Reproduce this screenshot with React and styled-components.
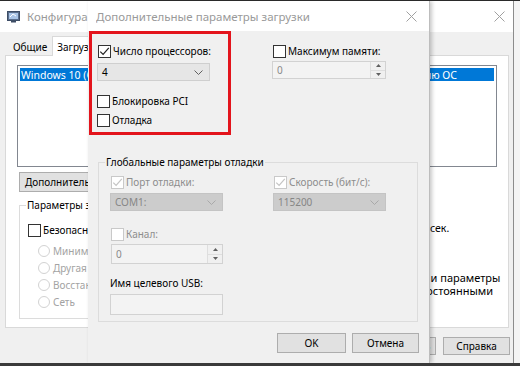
import React from "react";
import styled, { createGlobalStyle } from "styled-components";

const GlobalStyle = createGlobalStyle`
  html, body {
    margin: 0;
    padding: 0;
  }
  body {
    width: 520px;
    height: 366px;
    overflow: hidden;
    background: #f2f2f2;
    font-family: "Noto Sans", "Open Sans", sans-serif;
    font-size: 10px;
    color: #000;
  }
`;

const Desktop = styled.div`
  position: relative;
  width: 520px;
  height: 366px;
  box-sizing: border-box;
  border-top: 1px solid #2a2a2a;
  border-bottom: 3px solid #3a3a3a;
  background: #f4f4f4;
  overflow: hidden;
`;

const Window = styled.div`
  position: absolute;
  z-index: ${(p) => (p.$front ? 2 : 1)};
  left: ${(p) => p.$left}px;
  top: 0;
  width: ${(p) => p.$width}px;
  height: 362px;
  box-sizing: border-box;
  background: #f0f0f0;
  display: flex;
  flex-direction: column;
  overflow: hidden;
  border-right: 1px solid ${(p) => (p.$front ? "#bdbdbd" : "#8c8c8c")};
  box-shadow: ${(p) => (p.$front ? "2px 0 4px rgba(0, 0, 0, 0.22)" : "none")};
`;

const TitleBar = styled.div`
  height: ${(p) => p.$height}px;
  flex: none;
  background: #fff;
  display: flex;
  align-items: center;
  gap: 7px;
  padding-left: ${(p) => p.$pad}px;
  padding-right: ${(p) => p.$padRight}px;
`;

const TitleText = styled.div`
  flex: 1;
  font-size: 11.5px;
  color: #9a9a9a;
  white-space: nowrap;
  overflow: hidden;
`;

const CloseIcon = () => (
  <svg width="11" height="11" viewBox="0 0 11 11">
    <path d="M0.5 0.5 L10.5 10.5 M10.5 0.5 L0.5 10.5" stroke="#a0a0a0" strokeWidth="1" fill="none" />
  </svg>
);

const AppIcon = () => (
  <svg width="13" height="13" viewBox="0 0 13 13">
    <rect x="0.5" y="1.5" width="12" height="9" fill="#5a6e8c" stroke="#3d4d66" />
    <rect x="2" y="3" width="9" height="6" fill="#a9c4e6" />
    <path d="M3 7 L6 4 L9 6" stroke="#ffffff" strokeWidth="1" fill="none" />
    <rect x="4" y="11" width="5" height="1.5" fill="#3d4d66" />
  </svg>
);

/* ---------- checkboxes, radios, fields ---------- */

const Box = styled.span`
  width: 13px;
  height: 13px;
  flex: none;
  box-sizing: border-box;
  border: 1px solid ${(p) => (p.$disabled ? "#c9c9c9" : "#333")};
  background: #fff;
  display: inline-flex;
  align-items: center;
  justify-content: center;
`;

const Check = ({ checked, disabled }) => (
  <Box $disabled={disabled}>
    {checked && (
      <svg width="11" height="11" viewBox="0 0 11 11">
        <path
          d="M1.3 5.6 L4.1 8.4 L9.8 1.8"
          fill="none"
          stroke={disabled ? "#c4c4c4" : "#222"}
          strokeWidth="1.2"
        />
      </svg>
    )}
  </Box>
);

const CheckRow = styled.div`
  display: flex;
  align-items: center;
  gap: 2px;
  height: 14px;
  margin-top: ${(p) => p.$top || 0}px;
  margin-left: ${(p) => p.$left || 0}px;
  color: ${(p) => (p.$disabled ? "#8d8d8d" : "#000")};
  white-space: nowrap;
`;

const Radio = styled.span`
  width: 12px;
  height: 12px;
  flex: none;
  box-sizing: border-box;
  border: 1px solid #d2d2d2;
  border-radius: 50%;
  background: #fff;
`;

const RadioRow = styled.div`
  display: flex;
  align-items: center;
  gap: 3px;
  height: 17px;
  color: #a3a3a3;
  white-space: nowrap;
`;

const Chevron = ({ color }) => (
  <svg width="9" height="5" viewBox="0 0 9 5">
    <path d="M0.5 0.5 L4.5 4.5 L8.5 0.5" fill="none" stroke={color} strokeWidth="1" />
  </svg>
);

const Combo = styled.div`
  width: ${(p) => p.$width}px;
  height: 18px;
  margin-top: ${(p) => p.$top || 0}px;
  margin-left: ${(p) => p.$left || 0}px;
  box-sizing: border-box;
  border: 1px solid ${(p) => (p.$disabled ? "#c4c4c4" : "#cfcfcf")};
  background: ${(p) => (p.$disabled ? "#cccccc" : "#e6e6e6")};
  color: ${(p) => (p.$disabled ? "#868686" : "#000")};
  display: flex;
  align-items: center;
  justify-content: space-between;
  padding: 0 6px 0 4px;
`;

const Field = styled.div`
  width: ${(p) => p.$width}px;
  height: ${(p) => p.$height || 18}px;
  margin-top: ${(p) => p.$top || 0}px;
  margin-left: ${(p) => p.$left || 0}px;
  box-sizing: border-box;
  border: 1px solid #d2d2d2;
  background: ${(p) => p.$bg || "#f3f3f3"};
  color: #8a8a8a;
  display: flex;
  align-items: center;
  justify-content: space-between;
  padding-left: 4px;
  flex: none;
`;

const SpinButtons = styled.div`
  width: 14px;
  height: 100%;
  display: flex;
  flex-direction: column;
  border-left: 1px solid #dedede;
`;

const SpinHalf = styled.div`
  flex: 1;
  display: flex;
  align-items: center;
  justify-content: center;
  background: #f0f0f0;
  & + & {
    border-top: 1px solid #dedede;
  }
`;

const Arrow = ({ up }) => (
  <svg width="5" height="3" viewBox="0 0 5 3">
    <path d={up ? "M0 3 L2.5 0 L5 3 Z" : "M0 0 L2.5 3 L5 0 Z"} fill="#606060" />
  </svg>
);

const Spin = ({ width, height, top, left, value }) => (
  <Field $width={width} $height={height} $top={top} $left={left}>
    <span>{value}</span>
    <SpinButtons>
      <SpinHalf>
        <Arrow up />
      </SpinHalf>
      <SpinHalf>
        <Arrow />
      </SpinHalf>
    </SpinButtons>
  </Field>
);

const Button = styled.div`
  width: ${(p) => p.$width}px;
  height: ${(p) => p.$height || 20}px;
  box-sizing: border-box;
  border: 1px solid #adadad;
  background: #e1e1e1;
  display: flex;
  align-items: center;
  justify-content: ${(p) => (p.$start ? "flex-start" : "center")};
  padding-left: ${(p) => (p.$start ? 5 : 0)}px;
  white-space: nowrap;
  flex: none;
`;

/* ---------- background window: msconfig ---------- */

const Tabs = styled.div`
  height: 23px;
  display: flex;
  align-items: flex-end;
  padding-left: 8px;
  flex: none;
  position: relative;
  z-index: 1;
`;

const Tab = styled.div`
  height: ${(p) => (p.$active ? 20 : 17)}px;
  padding: 0 ${(p) => (p.$active ? 4 : 4)}px;
  box-sizing: border-box;
  display: flex;
  align-items: center;
  background: ${(p) => (p.$active ? "#fff" : "transparent")};
  border: 1px solid ${(p) => (p.$active ? "#d9d9d9" : "transparent")};
  border-bottom: none;
  margin-bottom: ${(p) => (p.$active ? -1 : 0)}px;
`;

const Panel = styled.div`
  height: 273px;
  margin: 0 4px 0 5px;
  box-sizing: border-box;
  background: #fff;
  border: 1px solid #d9d9d9;
  padding: 9px 11px 0 11px;
  display: flex;
  flex-direction: column;
  flex: none;
`;

const ListBox = styled.div`
  width: 480px;
  height: 102px;
  box-sizing: border-box;
  border: 1px solid #828790;
  padding: 2px;
  flex: none;
`;

const ListItem = styled.div`
  height: 13px;
  background: #0078d7;
  color: #fff;
  display: flex;
  align-items: center;
  justify-content: space-between;
  padding: 0 37px 0 1px;
  white-space: nowrap;
  font-size: 10.5px;
`;

const MoreRow = styled.div`
  display: flex;
  margin: 5px 0 0 2px;
`;

const LowerRow = styled.div`
  display: flex;
  gap: 14px;
  margin-top: 13px;
  margin-left: 2px;
`;

const GroupBox = styled.div`
  position: relative;
  width: ${(p) => p.$width}px;
  height: ${(p) => p.$height}px;
  box-sizing: border-box;
  border: 1px solid #dcdcdc;
  padding: ${(p) => p.$pad};
  margin: ${(p) => p.$margin || 0};
  flex: none;
`;

const Legend = styled.span`
  position: absolute;
  top: -8px;
  left: 6px;
  padding: 0 1px;
  background: ${(p) => p.$bg};
  white-space: nowrap;
`;

const RadioList = styled.div`
  display: flex;
  flex-direction: column;
  margin-top: 5px;
  margin-left: 10px;
`;

const SideColumn = styled.div`
  display: flex;
  flex-direction: column;
`;

const TimeoutRow = styled.div`
  display: flex;
  align-items: center;
  gap: 4px;
  margin-top: 13px;
  white-space: nowrap;
  font-size: 10.5px;
`;

const TimeoutLabel = styled.span`
  width: 58px;
`;

const PersistRow = styled.div`
  display: flex;
  gap: 3px;
  margin-top: 33px;
  margin-left: 3px;
  line-height: 13px;
  font-size: 11px;
  white-space: nowrap;
`;

const FooterBar = styled.div`
  flex: 1;
  display: flex;
  justify-content: flex-end;
  align-items: flex-start;
  gap: 7px;
  padding: 9px 3px 0 0;
`;

/* ---------- front dialog ---------- */

const DialogBody = styled.div`
  flex: 1;
  display: flex;
  flex-direction: column;
  padding: 0 10px 0 1px;
`;

const TopRow = styled.div`
  display: flex;
  align-items: flex-start;
  gap: 41px;
  height: 104px;
`;

const Highlight = styled.div`
  width: 142px;
  height: 104px;
  box-sizing: border-box;
  border: 3px solid #e3141c;
  padding: 0 0 0 5px;
  display: flex;
  flex-direction: column;
`;

const Column = styled.div`
  display: flex;
  flex-direction: column;
`;

const GroupGrid = styled.div`
  display: grid;
  grid-template-columns: 163px 120px;
`;

const FieldLabel = styled.div`
  margin-top: ${(p) => p.$top}px;
  height: 14px;
  display: flex;
  align-items: center;
`;

const DialogFooter = styled.div`
  display: flex;
  justify-content: flex-end;
  gap: 6px;
  margin-top: 11px;
`;

const App = () => {
  return (
    <>
      <GlobalStyle />
      <Desktop>
        <Window $left={0} $width={514}>
          <TitleBar $height={31} $pad={7} $padRight={8}>
            <AppIcon />
            <TitleText>Конфигурация системы</TitleText>
            <CloseIcon />
          </TitleBar>
          <Tabs>
            <Tab>Общие</Tab>
            <Tab $active>Загрузка</Tab>
            <Tab>Службы</Tab>
            <Tab>Автозагрузка</Tab>
            <Tab>Сервис</Tab>
          </Tabs>
          <Panel>
            <ListBox>
              <ListItem>
                <span>Windows 10 (C:\Windows) : Текущая ОС;</span>
                <span>Загружаемая по умолчанию ОС</span>
              </ListItem>
            </ListBox>
            <MoreRow>
              <Button $width={170} $start>
                Дополнительные параметры...
              </Button>
            </MoreRow>
            <LowerRow>
              <GroupBox $width={270} $height={114} $pad="10px 0 0 8px">
                <Legend $bg="#fff">Параметры загрузки</Legend>
                <CheckRow $top={7}>
                  <Check />
                  Безопасный режим
                </CheckRow>
                <RadioList>
                  <RadioRow>
                    <Radio />
                    Минимальная
                  </RadioRow>
                  <RadioRow>
                    <Radio />
                    Другая оболочка
                  </RadioRow>
                  <RadioRow>
                    <Radio />
                    Восстановление Active Directory
                  </RadioRow>
                  <RadioRow>
                    <Radio />
                    Сеть
                  </RadioRow>
                </RadioList>
              </GroupBox>
              <SideColumn>
                <TimeoutRow>
                  <TimeoutLabel>Таймаут:</TimeoutLabel>
                  <Field $width={61} $height={20} $bg="#fff">30</Field>
                  <span>сек.</span>
                </TimeoutRow>
                <PersistRow>
                  <Check />
                  <span>
                    Сделать изменения и параметры
                    <br />
                    загрузки системы постоянными
                  </span>
                </PersistRow>
              </SideColumn>
            </LowerRow>
          </Panel>
          <FooterBar>
            <Button $width={67} $height={18}>OK</Button>
            <Button $width={67} $height={18}>Отмена</Button>
            <Button $width={67} $height={18}>Применить</Button>
            <Button $width={67} $height={18}>Справка</Button>
          </FooterBar>
        </Window>

        <Window $left={88} $width={342} $front>
          <TitleBar $height={30} $pad={8} $padRight={12}>
            <TitleText>Дополнительные параметры загрузки</TitleText>
            <CloseIcon />
          </TitleBar>
          <DialogBody>
            <TopRow>
              <Highlight>
                <CheckRow $top={10} $left={1}>
                  <Check checked />
                  Число процессоров:
                </CheckRow>
                <Combo $width={113} $top={5}>
                  <span>4</span>
                  <Chevron color="#606060" />
                </Combo>
                <CheckRow $top={13}>
                  <Check />
                  Блокировка PCI
                </CheckRow>
                <CheckRow $top={5}>
                  <Check />
                  Отладка
                </CheckRow>
              </Highlight>
              <Column>
                <CheckRow $top={13} $left={1}>
                  <Check />
                  Максимум памяти:
                </CheckRow>
                <Spin width={114} height={18} top={3} value="0" />
              </Column>
            </TopRow>
            <GroupBox $width={320} $height={160} $pad="12px 0 0 11px" $margin="27px 0 0 9px">
              <Legend $bg="#f0f0f0">Глобальные параметры отладки</Legend>
              <GroupGrid>
                <Column>
                  <CheckRow $left={1} $disabled>
                    <Check checked disabled />
                    Порт отладки:
                  </CheckRow>
                  <Combo $width={113} $top={4} $disabled>
                    <span>COM1:</span>
                    <Chevron color="#a9a9a9" />
                  </Combo>
                  <CheckRow $top={16} $left={1} $disabled>
                    <Check disabled />
                    Канал:
                  </CheckRow>
                  <Spin width={112} height={20} top={3} left={1} value="0" />
                  <FieldLabel $top={12}>Имя целевого USB:</FieldLabel>
                  <Field $width={113} $height={21} $top={4} />
                </Column>
                <Column>
                  <CheckRow $left={1} $disabled>
                    <Check checked disabled />
                    Скорость (бит/с):
                  </CheckRow>
                  <Combo $width={113} $top={4} $disabled>
                    <span>115200</span>
                    <Chevron color="#a9a9a9" />
                  </Combo>
                </Column>
              </GroupGrid>
            </GroupBox>
            <DialogFooter>
              <Button $width={69}>OK</Button>
              <Button $width={67}>Отмена</Button>
            </DialogFooter>
          </DialogBody>
        </Window>
      </Desktop>
    </>
  );
};

export default App;
